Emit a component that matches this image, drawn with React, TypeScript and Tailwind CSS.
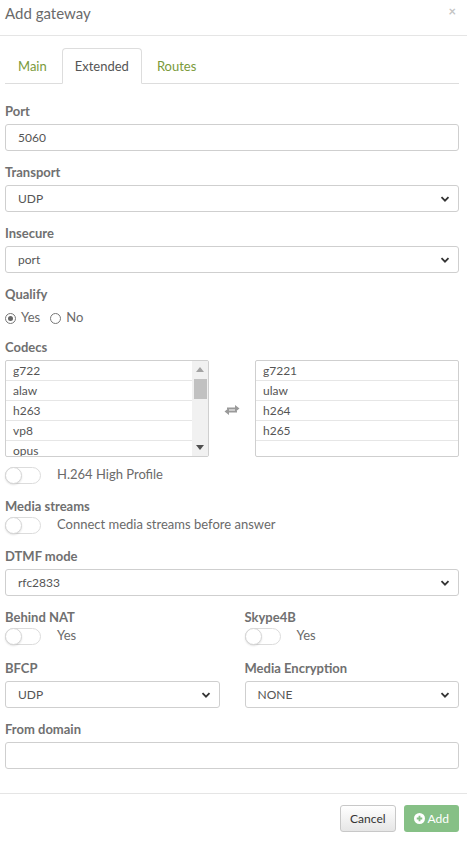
import { useState } from "react";

const font = { fontFamily: "Lato, 'Open Sans', sans-serif" };

const Label = ({ children, tight }: { children: React.ReactNode; tight?: boolean }) => (
  <div className={`h-[18px] leading-[18px] text-[13px] font-bold text-[#707070] ${tight ? "" : "mb-[4px]"}`}>
    {children}
  </div>
);

const Chevron = () => (
  <svg width="10" height="10" viewBox="0 0 10 10" className="absolute right-[8px] top-1/2 -translate-y-1/2">
    <path d="M1.5 3.2 L5 6.7 L8.5 3.2" fill="none" stroke="#333" strokeWidth="1.8" />
  </svg>
);

const Select = ({ value, className = "" }: { value: string; className?: string }) => (
  <div
    className={`relative h-[27px] border border-[#cfcfcf] rounded-[3px] bg-white flex items-center pl-[12px] text-[12px] text-[#555] ${className}`}
  >
    {value}
    <Chevron />
  </div>
);

const Input = ({ value = "" }: { value?: string }) => (
  <div className="h-[27px] border border-[#cfcfcf] rounded-[3px] bg-white flex items-center pl-[12px] text-[12px] text-[#555]">
    {value}
  </div>
);

const Toggle = ({ text }: { text: string }) => {
  const [on, setOn] = useState(false);
  return (
    <div className="h-[20px] flex items-center">
      <button
        onClick={() => setOn(!on)}
        className={`relative w-[36px] h-[17px] rounded-full border border-[#dcdcdc] ${on ? "bg-[#8bc08b]" : "bg-white"}`}
      >
        <span
          className={`absolute top-[-1px] w-[17px] h-[17px] rounded-full bg-white border border-[#d6d6d6] shadow-[0_1px_2px_rgba(0,0,0,0.12)] ${on ? "left-[18px]" : "left-[-1px]"}`}
        />
      </button>
      <span className="ml-[16px] text-[13px] text-[#6a6a6a]">{text}</span>
    </div>
  );
};

const Radio = ({ checked, text }: { checked?: boolean; text: string }) => (
  <label className="flex items-center gap-[5px] text-[13px] text-[#6a6a6a]">
    <span className="w-[11px] h-[11px] rounded-full border border-[#777] bg-white flex items-center justify-center">
      {checked && <span className="w-[5px] h-[5px] rounded-full bg-[#666]" />}
    </span>
    {text}
  </label>
);

const CodecList = ({ items, scroll }: { items: string[]; scroll?: boolean }) => (
  <div className="relative h-[97px] border border-[#cfcfcf] rounded-[2px] bg-white overflow-hidden flex">
    <div className="flex-1">
      {items.map((c) => (
        <div key={c} className="h-[20px] leading-[20px] pl-[7px] border-b border-[#e6e6e6] text-[12px] text-[#555]">
          {c}
        </div>
      ))}
    </div>
    {scroll && (
      <div className="w-[16px] bg-[#f1f1f1] flex flex-col items-center">
        <svg width="8" height="5" viewBox="0 0 8 5" className="mt-[6px]">
          <path d="M0 5 L4 0 L8 5 Z" fill="#a3a3a3" />
        </svg>
        <div className="mt-[7px] w-[13px] h-[20px] bg-[#c1c1c1]" />
        <svg width="8" height="5" viewBox="0 0 8 5" className="mt-auto mb-[6px]">
          <path d="M0 0 L4 5 L8 0 Z" fill="#505050" />
        </svg>
      </div>
    )}
  </div>
);

export default function App() {
  const [tab] = useState("Extended");
  return (
    <div className="w-[467px] min-h-[841px] bg-white" style={font}>
      {/* header */}
      <div className="h-[36px] border-b border-[#e5e5e5] px-[5px] pt-[4px] flex justify-between">
        <div className="text-[15px] leading-[18px] text-[#6a6a6a]">Add gateway</div>
        <span className="text-[13px] leading-[13px] font-bold text-[#c4c4c4] mr-[6px] mt-[1px]">×</span>
      </div>

      <div className="pl-[5px] pr-[8px]">
        {/* tabs */}
        <div className="mt-[12px] h-[36px] border-b border-[#dddddd] flex">
          {["Main", "Extended", "Routes"].map((t) => (
            <div
              key={t}
              className={`h-[36px] px-[12px] mr-[2px] pt-[2px] flex items-center text-[13px] rounded-t-[4px] ${
                t === tab
                  ? "border border-[#dddddd] border-b-white bg-white text-[#555]"
                  : "border border-transparent text-[#7a9a3a]"
              }`}
            >
              {t}
            </div>
          ))}
        </div>

        {/* form */}
        <div className="mt-[18px]">
          <Label>Port</Label>
          <Input value="5060" />

          <div className="mt-[12px]">
            <Label>Transport</Label>
            <Select value="UDP" />
          </div>

          <div className="mt-[12px]">
            <Label>Insecure</Label>
            <Select value="port" />
          </div>

          <div className="mt-[12px]">
            <Label>Qualify</Label>
            <div className="h-[22px] flex items-center gap-[10px]">
              <Radio checked text="Yes" />
              <Radio text="No" />
            </div>
          </div>

          <div className="mt-[9px]">
            <Label>Codecs</Label>
            <div className="grid grid-cols-[204px_1fr_204px] items-center">
              <CodecList items={["g722", "alaw", "h263", "vp8", "opus"]} scroll />
              <div className="flex justify-center pt-[2px]">
                <svg width="18" height="14" viewBox="0 0 18 14">
                  <path d="M4 4.5 H12 V2 L16.5 5.5 L12 9 V6.5 H4 Z" fill="#9a9a9a" />
                  <path d="M14 7.5 H6 V5 L1.5 8.5 L6 12 V9.5 H14 Z" fill="#9a9a9a" />
                </svg>
              </div>
              <CodecList items={["g7221", "ulaw", "h264", "h265", ""]} />
            </div>
          </div>

          <div className="mt-[8px]">
            <Toggle text="H.264 High Profile" />
          </div>

          <div className="mt-[12px]">
            <Label tight>Media streams</Label>
            <Toggle text="Connect media streams before answer" />
          </div>

          <div className="mt-[12px]">
            <Label>DTMF mode</Label>
            <Select value="rfc2833" />
          </div>

          <div className="mt-[12px] grid grid-cols-2 gap-x-[25px]">
            <div>
              <Label tight>Behind NAT</Label>
              <Toggle text="Yes" />
            </div>
            <div>
              <Label tight>Skype4B</Label>
              <Toggle text="Yes" />
            </div>
          </div>

          <div className="mt-[13px] grid grid-cols-2 gap-x-[25px]">
            <div>
              <Label>BFCP</Label>
              <Select value="UDP" />
            </div>
            <div>
              <Label>Media Encryption</Label>
              <Select value="NONE" />
            </div>
          </div>

          <div className="mt-[12px]">
            <Label>From domain</Label>
            <Input />
          </div>
        </div>
      </div>

      {/* footer */}
      <div className="mt-[24px] border-t border-[#e5e5e5] pt-[11px] pr-[8px] flex justify-end gap-[8px]">
        <button className="h-[27px] px-[9px] rounded-[3px] border border-[#c8c8c8] bg-gradient-to-b from-white to-[#e6e6e6] text-[12px] text-[#333]">
          Cancel
        </button>
        <button className="h-[27px] px-[10px] rounded-[3px] bg-[#86c086] text-white text-[12px] flex items-center gap-[3px]">
          <svg width="11" height="11" viewBox="0 0 12 12">
            <circle cx="6" cy="6" r="6" fill="white" />
            <path d="M6 3 V9 M3 6 H9" stroke="#86c086" strokeWidth="2" />
          </svg>
          Add
        </button>
      </div>
    </div>
  );
}
